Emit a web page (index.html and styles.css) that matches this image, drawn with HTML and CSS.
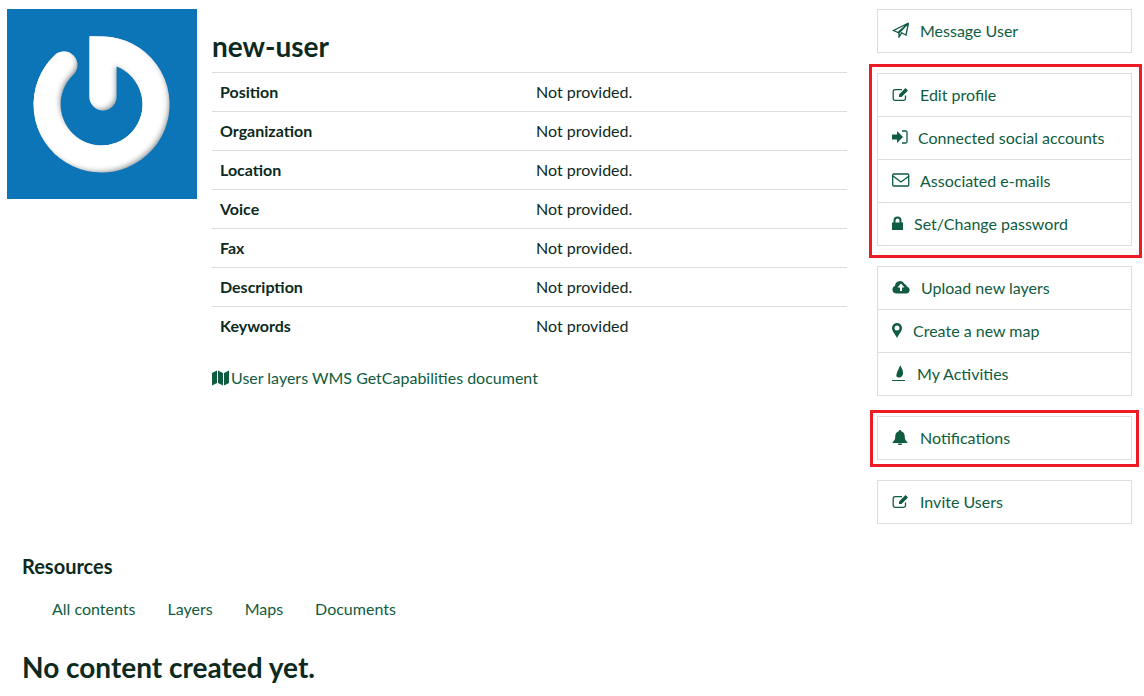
FILE: index.html
```html
<!DOCTYPE html>
<html lang="en">
<head>
    <meta charset="UTF-8">
    <meta name="viewport" content="width=device-width, initial-scale=1.0">
    <title>new-user</title>
    <link rel="stylesheet" href="styles.css">
</head>
<body>

<div class="top">
    <div class="avatar">
        <svg width="190" height="190" viewBox="0 0 190 190">
            <defs>
                <filter id="bevel" filterUnits="userSpaceOnUse" x="0" y="0" width="190" height="190">
                    <feGaussianBlur in="SourceAlpha" stdDeviation="3"/>
                    <feOffset dx="-3" dy="-3" result="soft"/>
                    <feFlood flood-color="#fff"/>
                    <feComposite in2="soft" operator="in"/>
                    <feComposite in2="SourceAlpha" operator="in" result="light"/>
                    <feMerge>
                        <feMergeNode in="SourceGraphic"/>
                        <feMergeNode in="light"/>
                        <feMergeNode in="light"/>
                    </feMerge>
                </filter>
            </defs>
            <rect width="190" height="190" fill="#0b75b8"/>
            <path class="ring" filter="url(#bevel)" d="M96 88V41A54.500 54.500 0 1 1 57 56"/>
        </svg>
    </div>

    <div class="profile">
        <h2>new-user</h2>
        <table class="details">
            <tr><th>Position</th><td>Not provided.</td></tr>
            <tr><th>Organization</th><td>Not provided.</td></tr>
            <tr><th>Location</th><td>Not provided.</td></tr>
            <tr><th>Voice</th><td>Not provided.</td></tr>
            <tr><th>Fax</th><td>Not provided.</td></tr>
            <tr><th>Description</th><td>Not provided.</td></tr>
            <tr><th>Keywords</th><td>Not provided</td></tr>
        </table>
        <a class="wms" href="#">
            <svg class="map-icon" width="17" height="16" viewBox="0 0 17 16"><path d="M0 3l5-2.500V13l-5 2.500zM6 .5l5 2.500V15.500L6 13zM12 3l5-2.500V13l-5 2.500z"/></svg>
            <span>User layers WMS GetCapabilities document</span>
        </a>
    </div>

    <div class="actions">
        <ul class="list-group first">
            <li><a href="#">
                <svg class="icon" width="18" height="16" viewBox="0 0 18 16"><path class="line" d="M16.500 1L1.500 8.500l4.500 2L16.500 1zM16.500 1L14 13l-5-2.500M16.500 1L7 11v4l2.500-3.800"/></svg>
                <span class="gap-a">Message User</span>
            </a></li>
        </ul>

        <div class="marked big">
            <ul class="list-group">
                <li><a href="#">
                    <svg class="icon" width="18" height="16" viewBox="0 0 18 16"><path class="line" d="M13.500 9.500v3A1.800 1.800 0 0 1 11.700 14.300H3A1.800 1.800 0 0 1 1.200 12.500V5.500A1.800 1.800 0 0 1 3 3.700h7"/><path d="M7 8.500L13.500 2l2.500 2.500-6.500 6.500H7z"/></svg>
                    <span class="gap-a">Edit profile</span>
                </a></li>
                <li><a href="#">
                    <svg class="icon narrow" width="16" height="14" viewBox="0 0 16 14"><path d="M0 4.500h5V1l6 6-6 6V9.500H0z"/><path class="line" d="M10 1h3.500A1.500 1.500 0 0 1 15 2.500v9a1.500 1.500 0 0 1-1.500 1.500H10"/></svg>
                    <span class="gap-b">Connected social accounts</span>
                </a></li>
                <li><a href="#">
                    <svg class="icon" width="18" height="14" viewBox="0 0 18 14"><rect class="line" x=".7" y="1" width="16" height="12" rx="1"/><path class="line" d="M1 3l8 6 8-6"/></svg>
                    <span class="gap-a">Associated e-mails</span>
                </a></li>
                <li><a href="#">
                    <svg class="icon thin" width="11" height="14" viewBox="0 0 11 14"><path d="M0 6.500h11V14H0z"/><path class="line thick" d="M2.500 7V4.500a3 3 0 0 1 6 0V7"/></svg>
                    <span class="gap-c">Set/Change password</span>
                </a></li>
            </ul>
        </div>

        <ul class="list-group second">
            <li><a href="#">
                <svg class="icon" width="18" height="14" viewBox="0 0 18 14"><path fill-rule="evenodd" d="M4 13.500A4 4 0 0 1 3 5.800 5 5 0 0 1 12.500 4 3.500 3.500 0 0 1 15 6.800 3.400 3.400 0 0 1 14 13.500zM9 3.500L5.500 7.500H8V11h2V7.500h2.500z"/></svg>
                <span class="gap-d">Upload new layers</span>
            </a></li>
            <li><a href="#">
                <svg class="icon thin" width="10" height="15" viewBox="0 0 10 15"><path fill-rule="evenodd" d="M5 15C3 11 0 8 0 5a5 5 0 0 1 10 0c0 3-3 6-5 10zM5 2.500a2.500 2.500 0 1 0 0 5 2.500 2.500 0 0 0 0-5z"/></svg>
                <span class="gap-e">Create a new map</span>
            </a></li>
            <li><a href="#">
                <svg class="icon narrow" width="14" height="16" viewBox="0 0 14 16"><path d="M8.500 0c.5 3 2.500 4 2.500 7.500A4.300 4.300 0 0 1 7 12.500C6 12.500 5 12 4.500 11.500 4 9 6 5 8.500 0z"/><path d="M0 15h13v1H0z"/></svg>
                <span class="gap-f">My Activities</span>
            </a></li>
        </ul>

        <div class="marked small">
            <ul class="list-group">
                <li><a href="#">
                    <svg class="icon" width="16" height="15" viewBox="0 0 16 15"><path d="M8 0a1.200 1.200 0 0 1 1.200 1.300C11.500 2 12.700 3.800 12.700 6c0 3 .8 4.800 2.800 6.300v.7H.5v-.7C2.500 10.800 3.300 9 3.300 6c0-2.200 1.200-4 3.500-4.700A1.200 1.200 0 0 1 8 0zM6 13.500h4a2 2 0 0 1-4 0z"/></svg>
                    <span class="gap-g">Notifications</span>
                </a></li>
            </ul>
        </div>

        <ul class="list-group">
            <li><a href="#">
                <svg class="icon" width="18" height="16" viewBox="0 0 18 16"><path class="line" d="M13.500 9.500v3A1.800 1.800 0 0 1 11.700 14.300H3A1.800 1.800 0 0 1 1.200 12.500V5.500A1.800 1.800 0 0 1 3 3.700h7"/><path d="M7 8.500L13.500 2l2.500 2.500-6.500 6.500H7z"/></svg>
                <span class="gap-a">Invite Users</span>
            </a></li>
        </ul>
    </div>
</div>

<div class="resources">
    <h3>Resources</h3>
    <ul class="tabs">
        <li><a href="#">All contents</a></li>
        <li><a href="#">Layers</a></li>
        <li><a href="#">Maps</a></li>
        <li><a href="#">Documents</a></li>
    </ul>
    <h2 class="empty">No content created yet.</h2>
</div>

</body>
</html>
```

FILE: styles.css
```css
body {
    font-family: Lato, "Open Sans", sans-serif;
    font-size: 16px;
    color: #0c2a1e;
    background-color: #fff;
    margin: 0;
    padding: 0;
    overflow: hidden;
}
a {
    color: #0f5c40;
    text-decoration: none;
}
.top {
    display: flex;
    align-items: flex-start;
    padding: 9px 0 0 7px;
    height: 545px;
}
.avatar {
    width: 190px;
    height: 190px;
    flex: none;
}
.avatar svg {
    display: block;
}
.ring {
    fill: none;
    stroke: #8f9498;
    stroke-width: 27px;
    stroke-linecap: round;
}
.profile {
    width: 635px;
    margin-left: 15px;
    flex: none;
}
.profile h2 {
    font-size: 28px;
    line-height: 32px;
    font-weight: 700;
    margin: 21px 0 10px;
}
.details {
    width: 100%;
    border-collapse: collapse;
}
.details th,
.details td {
    height: 38px;
    padding: 0 8px;
    border-top: 1px solid #ddd;
    text-align: left;
    line-height: 20px;
}
.details th {
    width: 300px;
    font-weight: 700;
}
.wms {
    display: flex;
    align-items: center;
    gap: 2px;
    margin-top: 22px;
    line-height: 21px;
}
.map-icon {
    fill: #0f5c40;
}
.actions {
    width: 255px;
    margin-left: 30px;
    flex: none;
}
.list-group {
    list-style: none;
    margin: 0;
    padding: 0;
    border: 1px solid #ddd;
}
.list-group li + li {
    border-top: 1px solid #ddd;
}
.list-group a {
    display: flex;
    align-items: center;
    box-sizing: border-box;
    height: 42px;
    padding: 0 0 2px 14px;
}
.first {
    margin-bottom: 11px;
}
.second {
    margin-bottom: 14px;
}
.marked {
    border: 3px solid #ed1c24;
}
.marked.big {
    margin: 0 -10px 8px -8px;
    padding: 6px 7px 9px 5px;
}
.marked.small {
    margin: 0 -7px 13px -7px;
    padding: 3px 4px 4px 4px;
}
.icon {
    flex: none;
    fill: #0f5c40;
}
.line {
    fill: none;
    stroke: #0f5c40;
    stroke-width: 1.300px;
}
.thick {
    stroke-width: 2px;
}
.gap-a { margin-left: 10px; }
.gap-b { margin-left: 10px; }
.gap-c { margin-left: 11px; }
.gap-d { margin-left: 11px; }
.gap-e { margin-left: 11px; }
.gap-f { margin-left: 11px; }
.gap-g { margin-left: 12px; }
.resources {
    padding: 0 0 0 22px;
}
.resources h3 {
    font-size: 20px;
    line-height: 24px;
    font-weight: 700;
    margin: 0;
}
.tabs {
    display: flex;
    gap: 32px;
    list-style: none;
    margin: 21px 0 0;
    padding: 0 0 0 30px;
    line-height: 20px;
}
.empty {
    font-size: 28px;
    line-height: 32px;
    font-weight: 700;
    margin: 32px 0 0;
}
```
